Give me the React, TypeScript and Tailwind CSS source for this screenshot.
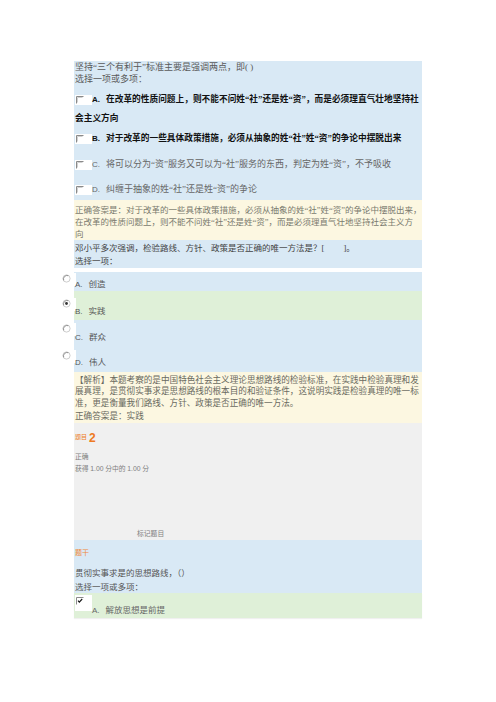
import React from 'react'

// 题目页面截图复刻：两道题的答题回顾
const zh = "font-['Liberation_Serif','Noto_Sans_CJK_SC',serif]"
const sans = "font-['Liberation_Sans','Noto_Sans_CJK_SC',sans-serif]"

function Box() {
  return (
    <div className="w-[17px] h-[10px] bg-white shrink-0 pl-[1px] pt-[1px]">
      <svg width="8" height="8" viewBox="0 0 8 8">
        <path d="M0.5 7.5V0.5H7.5" fill="none" stroke="#8a8a8a" strokeWidth="1" />
        <path d="M1.5 6.5V1.5H6.5" fill="none" stroke="#d0d0d0" strokeWidth="1" />
      </svg>
    </div>
  )
}

function Radio({ checked = false }: { checked?: boolean }) {
  return (
    <div className="w-[16px] h-[13px] bg-white shrink-0 pl-[2px] pt-[1px]">
      <svg width="9" height="9" viewBox="0 0 9 9">
        <circle cx="4.5" cy="4.5" r="3.6" fill="#fff" stroke="#c0c0c0" strokeWidth="0.8" />
        <path d="M1.7 6.3A3.6 3.6 0 0 1 6.3 1.7" fill="none" stroke="#7a7a7a" strokeWidth="0.8" />
        {checked && <circle cx="4.5" cy="4.5" r="1.4" fill="#333" />}
      </svg>
    </div>
  )
}

function Label({ k }: { k: string }) {
  return <span className={`${sans} text-[8px] mr-[6px]`}>{k}.</span>
}

export default function App() {
  return (
    <div className={`${zh} w-[496px] min-h-[702px] bg-white pt-[61px] pl-[74px]`}>
      <div className="w-[348px]">
        {/* 第一题 */}
        <div className="bg-[#d9e9f5] h-[139px] text-[9px] text-[#5a5a5a] pl-px">
          <div className="h-[12px] leading-[12px]">坚持“三个有利于”标准主要是强调两点，即( )</div>
          <div className="h-[13px] leading-[13px]">选择一项或多项：</div>
          <div className="pt-[5px] font-bold text-[#111] text-[8.7px]">
            <div className="h-[18px] flex items-center whitespace-nowrap">
              <Box />
              <Label k="A" />
              <span>在改革的性质问题上，则不能不问姓“社”还是姓“资”，而是必须理直气壮地坚持社</span>
            </div>
            <div className="h-[18px] leading-[18px]">会主义方向</div>
            <div className="mt-[3px] h-[18px] flex items-center whitespace-nowrap">
              <Box />
              <Label k="B" />
              <span>对于改革的一些具体政策措施，必须从抽象的姓“社”姓“资”的争论中摆脱出来</span>
            </div>
          </div>
          <div className="mt-[8px] h-[18px] flex items-center whitespace-nowrap text-[#666]">
            <Box />
            <Label k="C" />
            <span>将可以分为“资”服务又可以为“社”服务的东西，判定为姓“资”，不予吸收</span>
          </div>
          <div className="mt-[7px] h-[18px] flex items-center whitespace-nowrap text-[#666]">
            <Box />
            <Label k="D" />
            <span>纠缠于抽象的姓“社”还是姓“资”的争论</span>
          </div>
        </div>

        <div className="bg-[#fcf7e1] h-[40px] pt-[4px] pl-px text-[8.5px] leading-[12px] text-[#7a7a6e] whitespace-nowrap">
          <div>正确答案是：对于改革的一些具体政策措施，必须从抽象的姓“社”姓“资”的争论中摆脱出来，</div>
          <div>在改革的性质问题上，则不能不问姓“社”还是姓“资”，而是必须理直气壮地坚持社会主义方</div>
          <div>向</div>
        </div>

        {/* 第二题（选择一项） */}
        <div className="bg-[#d9e9f5] h-[28px] pt-[2px] pl-px text-[8.5px] leading-[12.5px] text-[#444]">
          <div>邓小平多次强调，检验路线、方针、政策是否正确的唯一方法是？[　　 ]。</div>
          <div>选择一项：</div>
        </div>
        <div className="h-[4px] bg-white" />

        <div className="text-[8.5px] leading-[12px] text-[#555]">
          <div className="bg-[#d9e9f5] h-[19px] flex items-start">
            <div className="ml-[-14px] mt-[1px]"><Radio /></div>
            <div className="mt-[6px] ml-[-1px]"><Label k="A" />创造</div>
          </div>
          <div className="bg-[#dff0d8] h-[29px] flex items-start">
            <div className="ml-[-14px] mt-[7px]"><Radio checked /></div>
            <div className="mt-[14px] ml-[-1px]"><Label k="B" />实践</div>
          </div>
          <div className="bg-[#d9e9f5] h-[52px]">
            <div className="h-[26px] flex items-start">
              <div className="ml-[-14px] mt-[3px]"><Radio /></div>
              <div className="mt-[11px] ml-[-1px]"><Label k="C" />群众</div>
            </div>
            <div className="h-[26px] flex items-start">
              <div className="ml-[-14px] mt-[4px]"><Radio /></div>
              <div className="mt-[10px] ml-[-1px]"><Label k="D" />伟人</div>
            </div>
          </div>
        </div>

        <div className="bg-[#fcf7e1] h-[51px] pt-[2px] pl-px text-[8.6px] text-[#6a6a60] whitespace-nowrap">
          <div className="h-[12px] leading-[12px]">【解析】本题考察的是中国特色社会主义理论思想路线的检验标准，在实践中检验真理和发</div>
          <div className="h-[11px] leading-[11px]">展真理，是贯彻实事求是思想路线的根本目的和验证条件，这说明实践是检验真理的唯一标</div>
          <div className="h-[12px] leading-[12px]">准，更是衡量我们路线、方针、政策是否正确的唯一方法。</div>
          <div className="h-[14px] leading-[14px]">正确答案是：实践</div>
        </div>

        {/* 题目 2 信息 */}
        <div className="bg-[#f0f0f0] h-[117px] pl-px text-[6.8px] text-[#808080]">
          <div className="h-[22px] pt-[7px] flex items-center gap-[2px] text-[#ee7a22]">
            <span className="text-[6px]">题目</span>
            <span className={`${sans} text-[12px] font-bold leading-none`}>2</span>
          </div>
          <div className="mt-[6px] h-[12px] leading-[12px]">正确</div>
          <div className="h-[12px] leading-[12px]">获得 <span className={sans}>1.00</span> 分中的 <span className={sans}>1.00</span> 分</div>
          <div className="mt-[53px] h-[12px] leading-[12px] pl-[62px]">标记题目</div>
        </div>

        <div className="bg-[#d9e9f5] h-[53px] pl-px">
          <div className="pt-[9px] h-[22px] text-[7px] leading-[8px] text-[#f08a3c]">题干</div>
          <div className="text-[8.5px] leading-[14px] text-[#555]">
            <div className="mt-[4px]">贯彻实事求是的思想路线，（）</div>
            <div>选择一项或多项：</div>
          </div>
        </div>

        <div className="bg-[#dff0d8] h-[25px] flex items-start text-[8.5px] leading-[12px] text-[#666] shadow-[0_1px_1px_rgba(0,0,0,0.06)]">
          <div className="mt-[2px] ml-px">
            <div className="w-[17px] h-[16px] bg-white pl-[1px] pt-[2px]">
              <svg width="8" height="8" viewBox="0 0 8 8">
                <path d="M0.5 7.5V0.5H7.5" fill="none" stroke="#8a8a8a" strokeWidth="1" />
                <path d="M2 3.6l1.3 1.5L6.2 2" fill="none" stroke="#111" strokeWidth="1.1" />
              </svg>
            </div>
          </div>
          <div className="mt-[11px]"><Label k="A" />解放思想是前提</div>
        </div>
      </div>
    </div>
  )
}
